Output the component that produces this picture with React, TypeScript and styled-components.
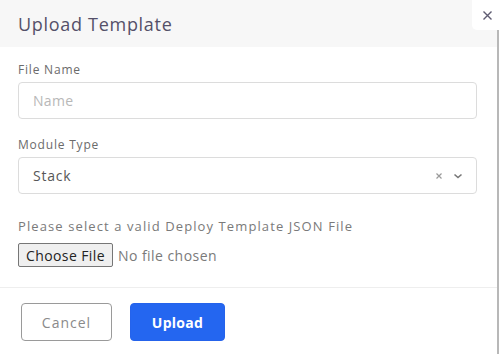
import React from "react";
import styled, { createGlobalStyle } from "styled-components";

const GlobalStyle = createGlobalStyle`
  html, body {
    margin: 0;
    padding: 0;
    background: #ffffff;
  }
  body {
    font-family: "Open Sans", "Liberation Sans", sans-serif;
  }
`;

const Dialog = styled.div`
  position: relative;
  width: 499px;
  height: 354px;
  overflow: hidden;
  background: #ffffff;
`;

const Panel = styled.div`
  width: 497px;
  height: 354px;
  border-right: 2px solid #b8b8b8;
  display: flex;
  flex-direction: column;
`;

const Header = styled.div`
  height: 47px;
  flex-shrink: 0;
  background: #f7f7f7;
  display: flex;
  align-items: center;
  padding: 0 18px;
  box-sizing: border-box;

  h2 {
    margin: 0;
    font-size: 18px;
    font-weight: 500;
    color: #545069;
    letter-spacing: 0.7px;
  }
`;

const CloseButton = styled.button`
  position: absolute;
  top: 0;
  right: 0;
  width: 27px;
  height: 30px;
  border: none;
  background: #ffffff;
  border-bottom-left-radius: 5px;
  display: flex;
  align-items: center;
  justify-content: center;
  padding: 0 0 0 4px;
  cursor: pointer;
`;

const Body = styled.div`
  display: flex;
  flex-direction: column;
  padding: 14px 20px 0 18px;
  height: 241px;
  flex-shrink: 0;
  box-sizing: border-box;
  border-bottom: 1px solid #eeeeee;
`;

const Field = styled.div`
  display: flex;
  flex-direction: column;
  gap: 4px;
  margin-bottom: 17px;
`;

const Label = styled.label`
  font-size: 12px;
  color: #6b6b6b;
  letter-spacing: 0.8px;
`;

const Box = styled.div<{ $muted?: boolean }>`
  height: 37px;
  border: 1px solid #dcdcdc;
  border-radius: 4px;
  display: flex;
  align-items: center;
  padding: 0 13px 0 14px;
  box-sizing: border-box;
  font-size: 14px;
  letter-spacing: ${(p) => (p.$muted ? "0.3px" : "0.8px")};
  color: ${(p) => (p.$muted ? "#b8b8b8" : "#575757")};
`;

const Grow = styled.span`
  flex: 1;
`;

const SelectIcons = styled.div`
  display: flex;
  align-items: center;
  gap: 10px;
`;

const Hint = styled.div`
  font-size: 13px;
  color: #7a7a7a;
  letter-spacing: 1.1px;
  margin: 6px 0 8px;
`;

const FileRow = styled.div`
  display: flex;
  align-items: center;
  gap: 5px;
  font-size: 14px;
  color: #7a7a7a;
  letter-spacing: 0.45px;
`;

const FileButton = styled.span`
  display: inline-flex;
  align-items: center;
  height: 24px;
  padding: 0 7px;
  background: #efefef;
  border: 1px solid #767676;
  border-radius: 2px;
  color: #222222;
  letter-spacing: 0.4px;
  box-sizing: border-box;
`;

const Footer = styled.div`
  display: flex;
  gap: 18px;
  padding: 15px 21px;
`;

const Button = styled.button<{ $primary?: boolean }>`
  width: ${(p) => (p.$primary ? "95px" : "91px")};
  height: 38px;
  border-radius: 4px;
  font-family: inherit;
  font-size: 14px;
  font-weight: ${(p) => (p.$primary ? 700 : 500)};
  letter-spacing: ${(p) => (p.$primary ? "0.3px" : "1px")};
  border: 1px solid ${(p) => (p.$primary ? "#2563eb" : "#9a9a9a")};
  background: ${(p) => (p.$primary ? "#2466f0" : "#ffffff")};
  color: ${(p) => (p.$primary ? "#ffffff" : "#8a8a8a")};
  cursor: pointer;
`;

const App = () => {
  return (
    <Dialog>
      <GlobalStyle />
      <Panel>
        <Header>
          <h2>Upload Template</h2>
        </Header>
        <Body>
          <Field>
            <Label>File Name</Label>
            <Box $muted>Name</Box>
          </Field>
          <Field>
            <Label>Module Type</Label>
            <Box>
              <Grow>Stack</Grow>
              <SelectIcons>
                <svg width="8" height="8" viewBox="0 0 8 8">
                  <path d="M1.5 1.5 L6.5 6.5 M6.5 1.5 L1.5 6.5" stroke="#9a9a9a" strokeWidth="1.2" />
                </svg>
                <svg width="10" height="8" viewBox="0 0 10 8">
                  <path d="M1.5 2.5 L5 5.5 L8.5 2.5" fill="none" stroke="#777777" strokeWidth="1.6" />
                </svg>
              </SelectIcons>
            </Box>
          </Field>
          <Hint>Please select a valid Deploy Template JSON File</Hint>
          <FileRow>
            <FileButton>Choose File</FileButton>
            <span>No file chosen</span>
          </FileRow>
        </Body>
        <Footer>
          <Button>Cancel</Button>
          <Button $primary>Upload</Button>
        </Footer>
      </Panel>
      <CloseButton aria-label="close">
        <svg width="11" height="11" viewBox="0 0 11 11">
          <path d="M1.5 1.5 L9.5 9.5 M9.5 1.5 L1.5 9.5" stroke="#5f5c72" strokeWidth="1.4" />
        </svg>
      </CloseButton>
    </Dialog>
  );
};

export default App;
